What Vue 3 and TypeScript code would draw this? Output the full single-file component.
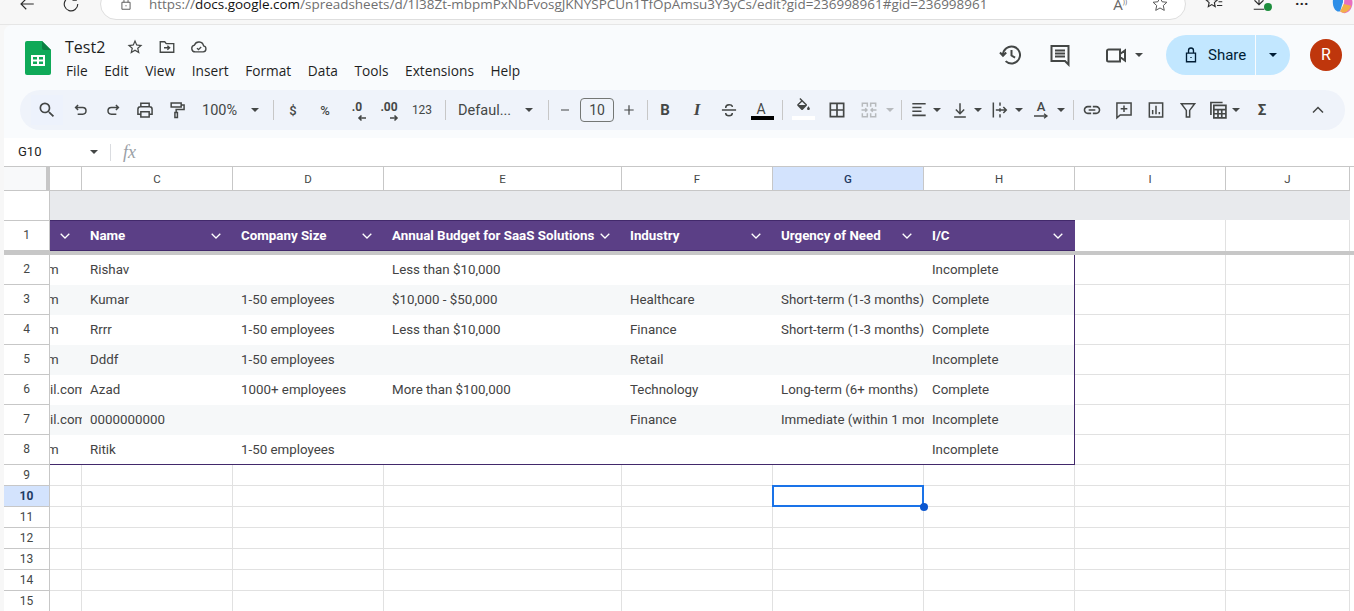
<template>
  <div class="page">
    <div class="browser">
      <div class="browser__row">
        <svg class="ic bi bi--back" viewBox="0 0 24 24"><path :d="icons.back" /></svg>
        <svg class="ic bi bi--reload" viewBox="0 0 24 24"><path :d="icons.reload" /></svg>
        <div class="url">
          <svg class="ic url__lock" viewBox="0 0 24 24"><path :d="icons.urlLock" /></svg>
          <span class="url__text"><span class="url__dim">https://</span>docs.google.com<span class="url__dim">/spreadsheets/d/1I38Zt-mbpmPxNbFvosgJKNYSPCUn1TfOpAmsu3Y3yCs/edit?gid=236998961#gid=236998961</span></span>
          <span class="url__read">A<small>))</small></span>
          <svg class="ic url__star" viewBox="0 0 24 24"><path :d="icons.thinStar" /></svg>
        </div>
        <svg class="ic bi bi--fav" viewBox="0 0 24 24"><path :d="icons.favs" /></svg>
        <div class="bi--dl">
          <svg class="ic bi" viewBox="0 0 24 24"><path :d="icons.download" /></svg>
          <span class="dl-badge"></span>
        </div>
        <span class="bi--more">···</span>
        <svg class="bi--copilot" viewBox="0 0 24 24">
          <path d="M3 4 C8 -2 14 2 13 10 L10 20 C4 22 0 12 3 4z" fill="#2f8fe8" />
          <path d="M13 2 C20 0 25 6 23 14 C21 22 14 24 10 20 C14 16 16 8 13 2z" fill="#e86fc0" />
          <path d="M10 20 C14 24 20 20 22 14 L14 12z" fill="#f2b04a" />
        </svg>
      </div>
    </div>

    <div class="app">
      <header class="head">
        <svg class="logo" viewBox="0 0 26 34">
          <path d="M2 0h15l9 9v23a2 2 0 0 1-2 2H2a2 2 0 0 1-2-2V2a2 2 0 0 1 2-2z" fill="#0fa958" />
          <path d="M17 0l9 9h-7a2 2 0 0 1-2-2z" fill="#0b8043" />
          <path d="M6 14h14v11H6z" fill="#fff" />
          <path d="M8 16h4v2.5H8zM14 16h4v2.5h-4zM8 20.5h4V23H8zM14 20.5h4V23h-4z" fill="#0fa958" />
        </svg>
        <div class="head__main">
          <div class="title-row">
            <span class="title">Test2</span>
            <svg class="title-ic title-ic--star" viewBox="0 0 24 24"><path class="solid" :d="icons.star" /></svg>
            <svg class="ic title-ic" viewBox="0 0 24 24"><path :d="icons.folder" /></svg>
            <svg class="ic title-ic" viewBox="0 0 24 24"><path :d="icons.cloud" /></svg>
          </div>
          <nav class="menu">
            <span v-for="item in menu" :key="item">{{ item }}</span>
          </nav>
        </div>
        <div class="actions">
          <svg class="ic act act--history" viewBox="0 0 24 24"><path :d="icons.history" /></svg>
          <svg class="ic act act--comment" viewBox="0 0 24 24"><path :d="icons.comment" /></svg>
          <svg class="ic act act--meet" viewBox="0 0 24 24"><path :d="icons.meet" /></svg>
          <span class="caret act__caret"></span>
          <div class="share">
            <div class="share__main">
              <svg class="ic share__lock" viewBox="0 0 24 24"><path :d="icons.lock" /></svg>
              <span>Share</span>
            </div>
            <div class="share__more"><span class="caret caret--dark"></span></div>
          </div>
          <div class="avatar">R</div>
        </div>
      </header>

      <div class="toolbar">
        <template v-for="(tool, i) in tools" :key="i">
          <span v-if="tool.t === 'sep'" class="tool" :style="boxStyle(tool)"><i class="sep"></i></span>
          <span v-else-if="tool.t === 'caret'" class="tool" :style="boxStyle(tool)"><i class="caret" :class="{ 'caret--off': tool.off }"></i></span>
          <span v-else-if="tool.t === 'text'" class="tool" :class="tool.cls" :style="boxStyle(tool)">{{ tool.label }}</span>
          <span v-else-if="tool.t === 'dec'" class="tool tool--dec" :style="boxStyle(tool)">
            <b>{{ tool.label }}</b>
            <svg class="dec-arrow" viewBox="0 0 10 8"><path :d="tool.d" /></svg>
          </span>
          <span v-else-if="tool.t === 'color'" class="tool tool--color" :style="boxStyle(tool)">
            <span class="color-a">A</span>
            <i class="color-bar"></i>
          </span>
          <span v-else-if="tool.t === 'bucket'" class="tool tool--color" :style="boxStyle(tool)">
            <svg class="bucket" viewBox="0 0 24 24"><path class="solid" :d="tool.d" /></svg>
            <i class="color-bar color-bar--white"></i>
          </span>
          <span v-else-if="tool.t === 'rotate'" class="tool tool--rotate" :style="boxStyle(tool)">
            <span class="rotate-a">A</span>
            <svg class="rotate-line" viewBox="0 0 16 6"><path d="M1 3h13M11 .8 14 3l-3 2.2" /></svg>
          </span>
          <span v-else class="tool" :class="tool.cls" :style="boxStyle(tool)">
            <svg class="tool__ic" :class="{ ic: !tool.solid }" viewBox="0 0 24 24"><path :class="{ solid: tool.solid }" :d="tool.d" /></svg>
          </span>
        </template>
      </div>

      <div class="formula">
        <span class="formula__name">G10</span>
        <span class="caret"></span>
        <i class="formula__sep"></i>
        <span class="formula__fx">fx</span>
      </div>

      <div class="sheet">
        <div class="row row--cols">
          <div class="corner"></div>
          <div v-for="col in columns" :key="col" class="col-head" :class="{ 'col-head--on': col === 'G' }">{{ col === "B" ? "" : col }}</div>
        </div>

        <div class="row row--band">
          <div class="num num--open"></div>
          <div class="band"></div>
        </div>

        <div class="row row--title">
          <div class="num num--top">1</div>
          <div v-for="(label, i) in headers" :key="i" class="th">
            <span>{{ label }}</span>
            <svg class="chev" viewBox="0 0 10 6"><path d="M.7.8 5 5 9.3.8" /></svg>
          </div>
          <div class="cell cell--blank"></div>
          <div class="cell cell--blank"></div>
        </div>

        <div class="freeze"></div>

        <div v-for="(rec, i) in records" :key="i" class="row row--tall">
          <div class="num">{{ i + 2 }}</div>
          <div
            v-for="(val, j) in rec"
            :key="j"
            class="td"
            :class="{ 'td--alt': i % 2 === 1, 'td--last': i === records.length - 1, 'td--end': j === rec.length - 1, 'td--cut': j === 0 && val === 'm' }"
          >
            <span>{{ val }}</span>
          </div>
          <div class="cell"></div>
          <div class="cell"></div>
        </div>

        <div v-for="n in emptyRows" :key="n" class="row row--short">
          <div class="num" :class="{ 'num--on': n === 10 }">{{ n }}</div>
          <div v-for="col in columns" :key="col" class="cell">
            <div v-if="n === 10 && col === 'G'" class="selection"><i class="selection__dot"></i></div>
          </div>
        </div>
      </div>
    </div>
  </div>
</template>

<script setup lang="ts">
interface Tool {
  t: "icon" | "sep" | "caret" | "text" | "dec" | "color" | "bucket" | "rotate";
  w: number;
  ml?: number;
  d?: string;
  solid?: boolean;
  label?: string;
  cls?: string;
  off?: boolean;
}

const icons = {
  back: "M21 12H4M11 5l-7 7 7 7",
  reload: "M19 6.5A9 9 0 1 0 21 12M19 2v5h-5",
  urlLock: "M5 9h14v12H5zM8.5 9V5.5a3.5 3.5 0 0 1 7 0V9M12 14v2",
  thinStar: "M12 3l2.8 6 6.4.7-4.8 4.4 1.3 6.4L12 17.3l-5.7 3.2 1.3-6.4-4.8-4.4 6.4-.7z",
  favs: "M9 1l2.2 5 5.3.6-4 3.6 1.1 5.3L9 12.8l-4.6 2.7 1.1-5.3-4-3.6 5.3-.6zM17 4h6M18 9h5M16 14h7",
  download: "M12 -4v16M6 7l6 6 6-6M5 19h14",
  star: "M22 9.24l-7.19-.62L12 2 9.19 8.63 2 9.24l5.46 4.73L5.82 21 12 17.27 18.18 21l-1.63-7.03L22 9.24zM12 15.4l-3.76 2.27 1-4.28-3.32-2.88 4.38-.38L12 6.1l1.71 4.04 4.38.38-3.32 2.88 1 4.28L12 15.4z",
  folder: "M3 5h6l2 2.5h10V19H3zM8 13h7M12.5 10.2 15.5 13l-3 2.8",
  cloud: "M7 18.5h10.5a4 4 0 0 0 .6-7.9A6.3 6.3 0 0 0 6 9.4a4.6 4.6 0 0 0 1 9.1zM9.3 13.5l2 2 3.6-3.6",
  history: "M4 12a8.5 8.5 0 1 1 2.6 6.1M1 9.5l3 3.2 3.2-3.2M12.5 7v5.5l3.6 2.2",
  comment: "M3.5 3h17v18.5L17 18H3.5zM7 7.5h10M7 10.5h10M7 13.5h10",
  meet: "M4.5 6.5H16v12H4.5a1.5 1.5 0 0 1-1.5-1.5V8a1.5 1.5 0 0 1 1.5-1.5zM16 11l5-3.5v10L16 14",
  lock: "M6 9.5h12V21H6zM8.7 9.5V6a3.3 3.3 0 0 1 6.6 0v3.5M12 14.5v1.5",
};

const fillPath =
  "M16.56 8.94L7.62 0 6.21 1.41l2.38 2.38-5.15 5.15c-.59.59-.59 1.54 0 2.12l5.5 5.5c.29.29.68.44 1.06.44s.77-.15 1.06-.44l5.5-5.5c.59-.58.59-1.53 0-2.12zM5.21 10L10 5.21 14.79 10H5.21zM19 11.5s-2 2.17-2 3.5c0 1.1.9 2 2 2s2-.9 2-2c0-1.33-2-3.5-2-3.5z";
const searchPath =
  "M15.5 14h-.79l-.28-.27A6.471 6.471 0 0 0 16 9.5 6.5 6.5 0 1 0 9.5 16c1.61 0 3.09-.59 4.23-1.57l.27.28v.79l5 4.99L20.49 19l-4.99-5zm-6 0C7.01 14 5 11.99 5 9.5S7.01 5 9.5 5 14 7.01 14 9.5 11.99 14 9.5 14z";
const linkPath =
  "M3.9 12c0-1.71 1.39-3.1 3.1-3.1h4V7H7c-2.76 0-5 2.24-5 5s2.24 5 5 5h4v-1.9H7c-1.71 0-3.1-1.39-3.1-3.1zM8 13h8v-2H8v2zm9-6h-4v1.9h4c1.71 0 3.1 1.39 3.1 3.1s-1.39 3.1-3.1 3.1h-4V17h4c2.76 0 5-2.24 5-5s-2.24-5-5-5z";

const menu = ["File", "Edit", "View", "Insert", "Format", "Data", "Tools", "Extensions", "Help"];

const tools: Tool[] = [
  { t: "icon", w: 32, d: searchPath, solid: true, cls: "tool--search" },
  { t: "icon", w: 32, ml: 2, d: "M8.5 6 5.5 9l3 3M6 9h8a4 4 0 0 1 0 8H8" },
  { t: "icon", w: 32, d: "M15.5 6l3 3-3 3M18 9h-8a4 4 0 0 0 0 8h6" },
  { t: "icon", w: 32, d: "M7 8V4h10v4M7 17H3.5v-6A3 3 0 0 1 6.5 8h11a3 3 0 0 1 3 3v6H17M7 14h10v6.5H7z" },
  { t: "icon", w: 32, d: "M5 3.5h12v5H5zM17 6h3.5v5.5H11v3.5M9.5 15h3v6h-3z" },
  { t: "text", w: 52, label: "100%", cls: "tool--zoom" },
  { t: "caret", w: 20 },
  { t: "sep", w: 16 },
  { t: "text", w: 24, label: "$", cls: "tool--sym" },
  { t: "text", w: 32, ml: 4, label: "%", cls: "tool--sym" },
  { t: "dec", w: 32, label: ".0", d: "M9 4H2M4.5 1.5 2 4l2.5 2.5" },
  { t: "dec", w: 32, label: ".00", d: "M1 4h7M5.5 1.5 8 4 5.5 6.5" },
  { t: "text", w: 34, label: "123", cls: "tool--num" },
  { t: "sep", w: 12 },
  { t: "text", w: 68, label: "Defaul...", cls: "tool--font" },
  { t: "caret", w: 20 },
  { t: "sep", w: 18 },
  { t: "icon", w: 16, d: "M6 12h12" },
  { t: "text", w: 34, ml: 7, label: "10", cls: "tool--size" },
  { t: "icon", w: 16, ml: 7, d: "M5 12h14M12 5v14" },
  { t: "sep", w: 20 },
  { t: "text", w: 16, label: "B", cls: "tool--bold" },
  { t: "text", w: 32, ml: 8, label: "I", cls: "tool--italic" },
  { t: "icon", w: 32, d: "M3.5 12h17M8 9.5c0-5 8-5 8-1M8 15.5c0 4.5 8 4.5 8 0" },
  { t: "color", w: 32 },
  { t: "sep", w: 10 },
  { t: "bucket", w: 32, d: fillPath },
  { t: "icon", w: 32, ml: 2, d: "M4 4h16v16H4zM12 4v16M4 12h16", cls: "tool--heavy" },
  { t: "icon", w: 32, d: "M4 8V4h6v4M20 8V4h-6v4M4 16v4h6v-4M20 16v4h-6v-4M3 12h6.5M7.5 10l2 2-2 2M21 12h-6.5M16.5 10l-2 2 2 2", cls: "tool--off" },
  { t: "caret", w: 10, off: true },
  { t: "sep", w: 12 },
  { t: "icon", w: 24, d: "M4 4.5h16M4 9h11M4 13.5h11M4 18.5h16", cls: "tool--heavy" },
  { t: "caret", w: 12 },
  { t: "icon", w: 22, ml: 6, d: "M12 4v12M7 11.5l5 5 5-5M5 20.5h14" },
  { t: "caret", w: 12, ml: 1 },
  { t: "icon", w: 22, ml: 5, d: "M4 3v18M12 3v4M12 10v4M12 17v4M7 12h12M16 8.5l3.5 3.5-3.5 3.5" },
  { t: "caret", w: 12, ml: 2 },
  { t: "rotate", w: 24, ml: 4 },
  { t: "caret", w: 16 },
  { t: "sep", w: 8 },
  { t: "icon", w: 30, d: linkPath, solid: true },
  { t: "icon", w: 32, ml: 1, d: "M3.5 3.5h17v14.5H7.5l-4 3.5zM12 6.5v8M8 10.5h8" },
  { t: "icon", w: 32, d: "M4 3.5h16v17H4zM8 17v-5M12 17V7M16 17v-2.5" },
  { t: "icon", w: 32, d: "M4 4.5h16l-6 8v8h-4v-8z" },
  { t: "icon", w: 28, d: "M7 6.5h14.5v15H7zM7 11.5h14.5M7 16.5h14.5M12 11.5v10M16.5 11.5v10M3.5 18V3h14", cls: "tool--heavy" },
  { t: "caret", w: 8 },
  { t: "text", w: 32, ml: 6, label: "Σ", cls: "tool--bold" },
  { t: "icon", w: 32, ml: 24, d: "M6 15l6-6 6 6" },
];

const boxStyle = (tool: Tool) => ({
  width: `${tool.w}px`,
  marginLeft: tool.ml ? `${tool.ml}px` : undefined,
});

const columns = ["B", "C", "D", "E", "F", "G", "H", "I", "J"];

const headers = ["", "Name", "Company Size", "Annual Budget for SaaS Solutions", "Industry", "Urgency of Need", "I/C"];

const records = [
  ["m", "Rishav", "", "Less than $10,000", "", "", "Incomplete"],
  ["m", "Kumar", "1-50 employees", "$10,000 - $50,000", "Healthcare", "Short-term (1-3 months)", "Complete"],
  ["m", "Rrrr", "1-50 employees", "Less than $10,000", "Finance", "Short-term (1-3 months)", "Complete"],
  ["m", "Dddf", "1-50 employees", "", "Retail", "", "Incomplete"],
  ["il.com", "Azad", "1000+ employees", "More than $100,000", "Technology", "Long-term (6+ months)", "Complete"],
  ["il.com", "0000000000", "", "", "Finance", "Immediate (within 1 month)", "Incomplete"],
  ["m", "Ritik", "1-50 employees", "", "", "", "Incomplete"],
];

const emptyRows = [9, 10, 11, 12, 13, 14, 15];
</script>

<style>
html,
body {
  margin: 0;
  height: 100%;
  overflow: hidden;
  background: #f7f7f7;
}
</style>

<style scoped>
.page {
  width: 1354px;
  height: 611px;
  overflow: hidden;
  font-family: Roboto, "Liberation Sans", sans-serif;
  color: #444746;
}

.ic {
  fill: none;
  stroke: currentColor;
  stroke-width: 2;
}

.solid {
  fill: currentColor;
  stroke: none;
}

/* browser strip, cut off by the top of the window */
.browser {
  height: 24px;
  background: #f7f7f7;
  border-bottom: 1px solid #e6e6e6;
  box-sizing: content-box;
  overflow: hidden;
}

.browser__row {
  display: flex;
  align-items: center;
  height: 8px;
}

.bi {
  width: 18px;
  height: 18px;
  color: #2b2b2b;
  stroke-width: 1.5;
}

.bi--back {
  margin-left: 18px;
}

.bi--reload {
  margin-left: 26px;
}

.url {
  display: flex;
  align-items: center;
  width: 1086px;
  height: 32px;
  margin-left: 20px;
  padding-left: 18px;
  box-sizing: border-box;
  background: #fff;
  border: 1px solid #dedede;
  border-radius: 16px;
  flex: none;
}

.url__lock {
  width: 14px;
  height: 14px;
  color: #555;
  stroke-width: 1.6;
}

.url__text {
  margin-left: 16px;
  font-family: "Open Sans", "Liberation Sans", sans-serif;
  font-size: 13.48px;
  color: #111;
  white-space: nowrap;
}

.url__dim {
  color: #6f6f6f;
}

.url__read {
  margin-left: auto;
  font-family: "Open Sans", sans-serif;
  font-size: 15px;
  color: #666;
}

.url__read small {
  font-size: 7px;
  vertical-align: 6px;
}

.url__star {
  width: 18px;
  height: 18px;
  margin: 0 16px 0 24px;
  color: #555;
  stroke-width: 1.3;
}

.bi--fav {
  margin-left: 19px;
}

.bi--dl {
  position: relative;
  display: flex;
  margin-left: 27px;
}

.dl-badge {
  position: absolute;
  right: -4px;
  top: 8px;
  width: 8px;
  height: 8px;
  background: #1e8e3e;
  border-radius: 50%;
}

.bi--more {
  margin-left: 27px;
  font-size: 15px;
  font-weight: 700;
  color: #222;
}

.bi--copilot {
  width: 22px;
  height: 22px;
  margin-left: 22px;
  flex: none;
}

/* docs window */
.app {
  margin-left: 4px;
  height: 586px;
  background: #f9fbfd;
  border-top-left-radius: 8px;
  overflow: hidden;
}

.head {
  display: flex;
  height: 65px;
}

.logo {
  width: 26px;
  height: 34px;
  margin: 16px 0 0 21px;
  flex: none;
}

.head__main {
  margin-left: 14px;
  padding-top: 11px;
}

.title-row {
  display: flex;
  align-items: center;
  height: 22px;
}

.title {
  width: 61px;
  font-family: "Open Sans", sans-serif;
  font-size: 16px;
  color: #1f1f1f;
}

.title-ic {
  width: 18px;
  height: 18px;
  margin-right: 14px;
  color: #444746;
  stroke-width: 1.8;
}

.menu {
  display: flex;
  gap: 16.6px;
  margin-top: 3px;
  margin-left: 1px;
  font-family: "Open Sans", sans-serif;
  font-size: 13.7px;
  line-height: 20px;
  color: #1f1f1f;
}

.actions {
  display: flex;
  align-items: center;
  margin-left: auto;
  height: 60px;
}

.act {
  width: 24px;
  height: 24px;
  color: #444746;
}

.act--comment {
  margin-left: 25px;
}

.act--meet {
  margin-left: 32px;
}

.act__caret {
  margin: 0 23px 0 7px;
}

.share {
  display: flex;
  height: 40px;
  background: #c2e7ff;
  border-radius: 20px;
  font-size: 15px;
  color: #001d35;
}

.share__main {
  display: flex;
  align-items: center;
  width: 90px;
  padding-left: 16px;
  box-sizing: border-box;
  border-right: 1px solid #f9fbfd;
}

.share__lock {
  width: 18px;
  height: 18px;
  margin-right: 8px;
  stroke-width: 1.8;
}

.share__more {
  display: flex;
  align-items: center;
  justify-content: center;
  width: 34px;
}

.avatar {
  width: 32px;
  height: 32px;
  margin: 0 12px 0 20px;
  background: #bf360c;
  border-radius: 50%;
  color: #fff;
  font-size: 16px;
  line-height: 32px;
  text-align: center;
}

.caret {
  display: block;
  width: 0;
  height: 0;
  border-left: 4px solid transparent;
  border-right: 4px solid transparent;
  border-top: 4px solid #444746;
}

.caret--dark {
  border-top-color: #001d35;
}

.caret--off {
  border-top-color: #b7babd;
}

/* toolbar */
.toolbar {
  display: flex;
  align-items: center;
  width: 1325px;
  height: 40px;
  margin-left: 16px;
  padding-left: 11px;
  box-sizing: border-box;
  background: #eff3fa;
  border-radius: 20px;
}

.tool {
  display: flex;
  align-items: center;
  justify-content: center;
  flex: none;
  height: 30px;
  color: #444746;
  font-size: 13px;
  white-space: nowrap;
}

.tool__ic {
  width: 20px;
  height: 20px;
  stroke-width: 1.8;
}

.tool--search {
  background: #edf2fc;
}

.tool--heavy .tool__ic {
  stroke-width: 2;
}

.tool--off {
  color: #b7babd;
}

.sep {
  display: block;
  width: 1px;
  height: 20px;
  background: #c7c7c7;
}

.tool--zoom {
  justify-content: flex-start;
  padding-left: 9px;
  box-sizing: border-box;
  font-size: 14.5px;
}

.tool--sym {
  font-weight: 500;
  font-size: 13px;
}

.tool--num {
  font-size: 12px;
}

.tool--font {
  justify-content: flex-start;
  padding-left: 7px;
  box-sizing: border-box;
  font-size: 14.5px;
}

.tool--size {
  height: 24px;
  border: 1px solid #747775;
  border-radius: 4px;
  box-sizing: border-box;
  font-size: 14px;
}

.tool--bold {
  font-size: 15px;
  font-weight: 700;
}

.tool--italic {
  font-family: "Liberation Serif", serif;
  font-size: 17px;
  font-style: italic;
  font-weight: 700;
}

.tool--dec {
  position: relative;
  font-size: 12px;
}

.tool--dec b {
  margin-top: -6px;
  font-weight: 700;
}

.dec-arrow {
  position: absolute;
  left: 50%;
  top: 19px;
  width: 10px;
  height: 8px;
  fill: none;
  stroke: #444746;
  stroke-width: 1.6;
}

.tool--color {
  position: relative;
}

.color-a {
  margin-top: -2px;
  font-size: 14px;
}

.color-bar {
  position: absolute;
  left: 6px;
  bottom: 5px;
  width: 23px;
  height: 4px;
  background: #000;
}

.color-bar--white {
  left: 5px;
  background: #fff;
}

.bucket {
  width: 17px;
  height: 17px;
  margin-top: -8px;
}

.tool--rotate {
  flex-direction: column;
  line-height: 12px;
}

.rotate-a {
  font-size: 13px;
  font-weight: 500;
}

.rotate-line {
  width: 16px;
  height: 6px;
  fill: none;
  stroke: #444746;
  stroke-width: 1.3;
}

/* name box */
.formula {
  display: flex;
  align-items: center;
  height: 28px;
  margin-top: 8px;
  padding-left: 14px;
  background: #fff;
}

.formula__name {
  width: 72px;
  margin-bottom: 2px;
  font-size: 13px;
  color: #1f1f1f;
}

.formula__sep {
  width: 1px;
  height: 17px;
  margin-left: 12px;
  background: #dadce0;
}

.formula__fx {
  margin-left: 12px;
  font-family: "Liberation Serif", serif;
  font-size: 18px;
  font-style: italic;
  color: #9aa0a6;
}

/* grid */
.sheet {
  background: #fff;
  font-size: 13.33px;
}

.row {
  display: grid;
  grid-template-columns: 46px 32px 151px 151px 238px 151px 151px 151px 151px 124px;
}

.row--cols {
  height: 25px;
  border-top: 1px solid #c7c7c7;
  box-sizing: border-box;
}

.row--band {
  height: 29px;
}

.row--title {
  height: 31px;
}

.row--tall {
  height: 30px;
}

.row--short {
  height: 21px;
}

.corner {
  background: #f8f9fa;
  border-right: 4px solid #c7c7c7;
  border-bottom: 1px solid #c7c7c7;
  box-sizing: border-box;
}

.col-head {
  display: flex;
  align-items: center;
  justify-content: center;
  border-right: 1px solid #c7c7c7;
  border-bottom: 1px solid #c7c7c7;
  box-sizing: border-box;
  font-size: 11.5px;
  color: #444746;
}

.col-head--on {
  background: #d3e3fd;
  font-weight: 500;
  color: #1f3a63;
}

.num {
  display: flex;
  align-items: center;
  justify-content: center;
  padding-bottom: 1px;
  border-right: 1px solid #c7c7c7;
  border-bottom: 1px solid #c7c7c7;
  box-sizing: border-box;
  font-size: 12px;
  color: #444746;
}

.num--open {
  border-bottom: 0;
}

.num--top {
  border-top: 1px solid #c7c7c7;
}

.num--on {
  background: #d3e3fd;
  color: #1f3a63;
  font-weight: 700;
}

.band {
  grid-column: 2 / -1;
  background: #e8eaed;
}

.th {
  display: flex;
  align-items: center;
  justify-content: space-between;
  padding: 0 12px 0 8px;
  box-sizing: border-box;
  background: #5b3f86;
  border-top: 1px solid #42296b;
  border-bottom: 1px solid #42296b;
  color: #fff;
  font-weight: 700;
  white-space: nowrap;
}

.th:nth-child(2) {
  justify-content: flex-end;
}

.chev {
  width: 10px;
  height: 6px;
  flex: none;
  fill: none;
  stroke: #fff;
  stroke-width: 1.3;
}

.freeze {
  height: 4px;
  background: #c7c7c7;
}

.td {
  display: flex;
  align-items: center;
  padding: 0 0 2px 8px;
  box-sizing: border-box;
  overflow: hidden;
  white-space: nowrap;
  color: #434343;
}

.td:nth-child(2) {
  padding-left: 0;
}

.td--cut span {
  margin-left: -3px;
}

.td--alt {
  background: #f6f8f9;
}

.td--last {
  padding-bottom: 1px;
  border-bottom: 1px solid #42296b;
}

.td--end {
  border-right: 1px solid #42296b;
}

.cell {
  position: relative;
  border-right: 1px solid #e1e1e1;
  border-bottom: 1px solid #e1e1e1;
  box-sizing: border-box;
}

.cell--blank {
  border-bottom: 0;
}

.selection {
  position: absolute;
  z-index: 2;
  left: -1px;
  top: -1px;
  width: 152px;
  height: 22px;
  border: 2px solid #1a73e8;
  box-sizing: border-box;
}

.selection__dot {
  position: absolute;
  right: -6px;
  bottom: -6px;
  width: 8px;
  height: 8px;
  background: #0b57d0;
  border-radius: 50%;
}
</style>
